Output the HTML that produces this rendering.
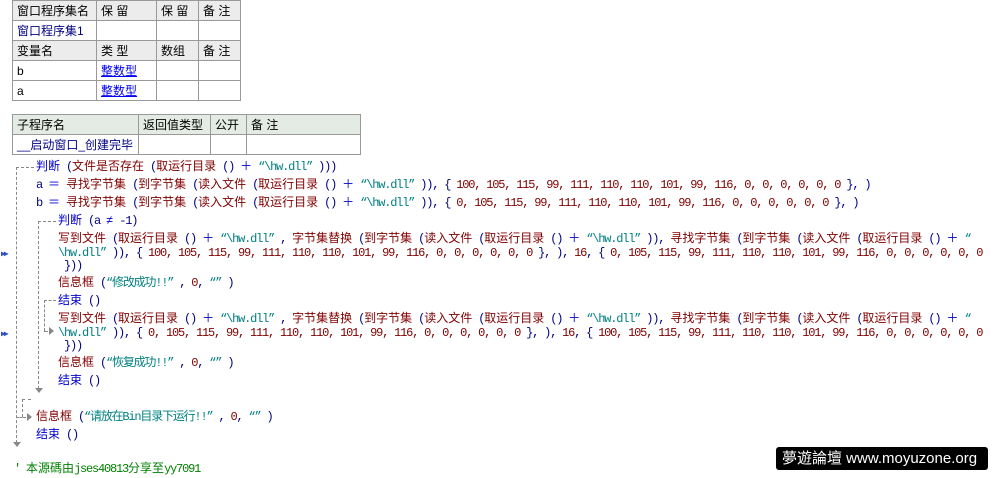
<!DOCTYPE html>
<html><head><meta charset="utf-8"><style>
body{margin:0;width:995px;height:478px;background:#fff;position:relative;overflow:hidden;font-family:"Liberation Mono","WenQuanYi Zen Hei",monospace;font-size:12px;}
table{position:absolute;border-collapse:collapse;font-size:12px;font-family:"Liberation Sans","WenQuanYi Zen Hei",sans-serif;}
td{border:1px solid #999;height:19px;padding:0 0 0 4px;white-space:nowrap;color:#000;}
.h1 td{background:#ececec}
.h2 td{background:#e4ebe4}
.lk{color:#0000ee;text-decoration:underline}
.nv{color:#000080}
.l{position:absolute;white-space:pre;letter-spacing:-1.2px;line-height:14px;color:#000080}
.k{color:#0000d0;letter-spacing:0}.r{color:#800000;letter-spacing:0}.n{color:#800000}.s{color:#008080}.p{color:#000080}.c{color:#008000}
.clip{position:absolute;left:0;top:0;width:987px;height:478px;overflow:hidden}
.dv{position:absolute;border-left:1px dashed #888;width:0}
.dh{position:absolute;border-top:1px dashed #888;height:0}
.ar{position:absolute;width:0;height:0;border-left:4px solid transparent;border-right:4px solid transparent;border-top:5px solid #888}
.arr{position:absolute;width:0;height:0;border-top:4px solid transparent;border-bottom:4px solid transparent;border-left:5px solid #888}
.bm{position:absolute;left:1px;color:#3050c0;font-size:8px;letter-spacing:-2px}
</style></head><body>
<table style="left:12px;top:0;width:229px">
<colgroup><col style="width:84px"><col style="width:60px"><col style="width:42px"><col style="width:42px"></colgroup>
<tr class="h1"><td>窗口程序集名</td><td>保 留</td><td>保 留</td><td>备 注</td></tr>
<tr><td class="nv">窗口程序集1</td><td></td><td></td><td></td></tr>
<tr class="h1"><td>变量名</td><td>类 型</td><td>数组</td><td>备 注</td></tr>
<tr><td>b</td><td><span class="lk">整数型</span></td><td></td><td></td></tr>
<tr><td>a</td><td><span class="lk">整数型</span></td><td></td><td></td></tr>
</table>
<table style="left:12px;top:114px;width:349px">
<colgroup><col style="width:126px"><col style="width:72px"><col style="width:36px"><col style="width:114px"></colgroup>
<tr class="h2"><td>子程序名</td><td>返回值类型</td><td>公开</td><td>备 注</td></tr>
<tr><td class="nv">__启动窗口_创建完毕</td><td></td><td></td><td></td></tr>
</table>

<div class="dh" style="left:16px;top:167px;width:18px"></div>
<div class="dv" style="left:16px;top:167px;height:276px"></div>
<div class="ar" style="left:13px;top:442px"></div>
<div class="dh" style="left:38px;top:221px;width:18px"></div>
<div class="dv" style="left:38px;top:221px;height:168px"></div>
<div class="ar" style="left:35px;top:388px"></div>
<div class="dh" style="left:44px;top:300px;width:12px"></div>
<div class="dv" style="left:44px;top:300px;height:31px"></div>
<div class="dh" style="left:44px;top:331px;width:4px"></div>
<div class="arr" style="left:49px;top:327px"></div>
<div class="dh" style="left:22px;top:399px;width:9px"></div>
<div class="dv" style="left:22px;top:399px;height:18px"></div>
<div class="dh" style="left:16px;top:417px;width:10px"></div>
<div class="arr" style="left:27px;top:413px"></div>
<div class="bm" style="top:249px">▶▶</div>
<div class="bm" style="top:329px">▶▶</div>

<div class="clip">
<div class="l" style="left:36px;top:160px"><span class="k">判断</span> (<span class="r">文件是否存在</span> (<span class="r">取运行目录</span> () <span class="k">＋</span> <span class="s">“\hw.dll”</span> )))</div>
<div class="l" style="left:36px;top:178px">a <span class="k">＝</span> <span class="r">寻找字节集</span> (<span class="r">到字节集</span> (<span class="r">读入文件</span> (<span class="r">取运行目录</span> () <span class="k">＋</span> <span class="s">“\hw.dll”</span> )), { <span class="n">100, 105, 115, 99, 111, 110, 110, 101, 99, 116, 0, 0, 0, 0, 0, 0</span> }, )</div>
<div class="l" style="left:36px;top:196px">b <span class="k">＝</span> <span class="r">寻找字节集</span> (<span class="r">到字节集</span> (<span class="r">读入文件</span> (<span class="r">取运行目录</span> () <span class="k">＋</span> <span class="s">“\hw.dll”</span> )), { <span class="n">0, 105, 115, 99, 111, 110, 110, 101, 99, 116, 0, 0, 0, 0, 0, 0</span> }, )</div>
<div class="l" style="left:58px;top:214px"><span class="k">判断</span> (a <span class="k">≠</span> -1)</div>
<div class="l" style="left:58px;top:232px"><span class="r">写到文件</span> (<span class="r">取运行目录</span> () <span class="k">＋</span> <span class="s">“\hw.dll”</span> , <span class="r">字节集替换</span> (<span class="r">到字节集</span> (<span class="r">读入文件</span> (<span class="r">取运行目录</span> () <span class="k">＋</span> <span class="s">“\hw.dll”</span> )), <span class="r">寻找字节集</span> (<span class="r">到字节集</span> (<span class="r">读入文件</span> (<span class="r">取运行目录</span> () <span class="k">＋</span> <span class="s">“</span></div>
<div class="l" style="left:58px;top:246px"><span class="s">\hw.dll”</span> )), { <span class="n">100, 105, 115, 99, 111, 110, 110, 101, 99, 116, 0, 0, 0, 0, 0, 0</span> }, ), <span class="n">16</span>, { <span class="n">0, 105, 115, 99, 111, 110, 110, 101, 99, 116, 0, 0, 0, 0, 0, 0</span></div>
<div class="l" style="left:64px;top:259px">}))</div>
<div class="l" style="left:58px;top:276px"><span class="r">信息框</span> (<span class="s">“修改成功!!”</span> , <span class="n">0</span>, <span class="s">“”</span> )</div>
<div class="l" style="left:58px;top:294px"><span class="k">结束</span> ()</div>
<div class="l" style="left:58px;top:312px"><span class="r">写到文件</span> (<span class="r">取运行目录</span> () <span class="k">＋</span> <span class="s">“\hw.dll”</span> , <span class="r">字节集替换</span> (<span class="r">到字节集</span> (<span class="r">读入文件</span> (<span class="r">取运行目录</span> () <span class="k">＋</span> <span class="s">“\hw.dll”</span> )), <span class="r">寻找字节集</span> (<span class="r">到字节集</span> (<span class="r">读入文件</span> (<span class="r">取运行目录</span> () <span class="k">＋</span> <span class="s">“</span></div>
<div class="l" style="left:58px;top:326px"><span class="s">\hw.dll”</span> )), { <span class="n">0, 105, 115, 99, 111, 110, 110, 101, 99, 116, 0, 0, 0, 0, 0, 0</span> }, ), <span class="n">16</span>, { <span class="n">100, 105, 115, 99, 111, 110, 110, 101, 99, 116, 0, 0, 0, 0, 0, 0</span></div>
<div class="l" style="left:64px;top:339px">}))</div>
<div class="l" style="left:58px;top:356px"><span class="r">信息框</span> (<span class="s">“恢复成功!!”</span> , <span class="n">0</span>, <span class="s">“”</span> )</div>
<div class="l" style="left:58px;top:374px"><span class="k">结束</span> ()</div>
<div class="l" style="left:36px;top:410px"><span class="r">信息框</span> (<span class="s">“请放在Bin目录下运行!!”</span> , <span class="n">0</span>, <span class="s">“”</span> )</div>
<div class="l" style="left:36px;top:428px"><span class="k">结束</span> ()</div>
<div class="l c" style="left:14px;top:462px">' <span style="letter-spacing:0">本源碼由</span>jses40813<span style="letter-spacing:0">分享至</span>yy7091</div>
</div>

<div style="position:absolute;left:776px;top:447px;width:212px;height:23px;background:#000;border-radius:3px;color:#fff;font-family:'Liberation Sans','WenQuanYi Zen Hei',sans-serif;font-size:15px;line-height:23px;white-space:nowrap;padding-left:6px;box-sizing:border-box">夢遊論壇 www.moyuzone.org</div>
</body></html>
